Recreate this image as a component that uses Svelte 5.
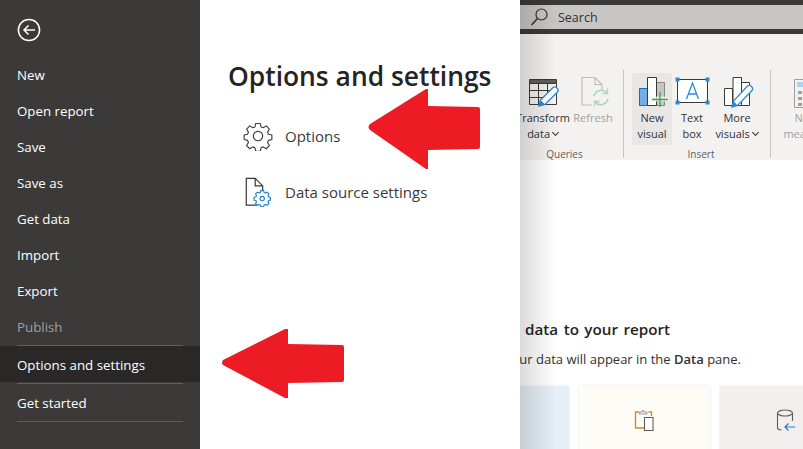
<script>
  const items = ['New', 'Open report', 'Save', 'Save as', 'Get data', 'Import', 'Export'];
</script>

<div class="page">
  <nav class="menu">
    <svg class="back" width="24" height="24" viewBox="0 0 24 24" fill="none" stroke="#fff">
      <circle cx="12" cy="12" r="10.6" stroke-width="1.5"/>
      <path d="M18 12H7M11.5 7.5 7 12l4.5 4.5" stroke-width="1.5"/>
    </svg>
    <ul>
      {#each items as label}
        <li class="item">{label}</li>
      {/each}
      <li class="item muted">Publish</li>
      <li class="sep"></li>
      <li class="item active">Options and settings</li>
      <li class="sep after"></li>
      <li class="item last">Get started</li>
      <li class="sep"></li>
    </ul>
  </nav>

  <section class="panel">
    <h1>Options and settings</h1>
    <div class="row">
      <svg width="32" height="32" viewBox="0 0 32 32" fill="none" stroke="#3b3a39" stroke-width="1.2">
        <circle cx="16" cy="16" r="5"/>
        <path d="M13.6 2.6h4.8l.9 3.7 2.2.9 3.3-2 3.4 3.4-2 3.3.9 2.2 3.7.9v4.800l-3.700.9-.9 2.200 2 3.300-3.400 3.400-3.300-2-2.200.9-.9 3.700h-4.800l-.9-3.700-2.200-.9-3.300 2-3.400-3.400 2-3.300-.9-2.200-3.700-.9v-4.800l3.700-.9.9-2.200-2-3.300 3.400-3.400 3.300 2 2.200-.9z" stroke-linejoin="round"/>
      </svg>
      <span>Options</span>
    </div>
    <div class="row">
      <svg width="32" height="32" viewBox="0 0 32 32" fill="none">
        <path d="M15 30H3.5V1.5H13L21 9.5v5M13 1.5V9.500h8" stroke="#3b3a39" stroke-width="1.3"/>
        <path d="M19 14.5h3l.5 2 1.3.6 1.800-1 2 2-1 1.800.6 1.300 2 .5v3l-2 .5-.6 1.300 1 1.800-2 2-1.800-1-1.300.6-.5 2h-3l-.5-2-1.300-.6-1.800 1-2-2 1-1.800-.6-1.300-2-.5v-3l2-.5.6-1.300-1-1.800 2-2 1.800 1 1.300-.6z" fill="#fff" stroke="#1f7fc4" stroke-width="1.2"/>
        <circle cx="20.5" cy="23" r="2.3" stroke="#1f7fc4" stroke-width="1.2"/>
      </svg>
      <span>Data source settings</span>
    </div>
  </section>

  <section class="app">
    <div class="titlebar">
      <div class="search">
        <svg width="20" height="20" viewBox="0 0 20 20" fill="none" stroke="#323130" stroke-width="1.2">
          <circle cx="11.5" cy="7.5" r="5.5"/><path d="M7.5 11.500 1.500 18" stroke-width="1.5"/>
        </svg>
        <span>Search</span>
      </div>
    </div>
    <div class="ribbon">
      <div class="group queries">
        <div class="tools">
          <div class="tool wide">
            <svg width="32" height="32" viewBox="0 0 32 32" fill="none">
              <path d="M2.5 3.5h27v4h-27z" fill="#605e5c" stroke="#3b3a39"/>
              <path d="M2.5 7.5h27v21h-27zM11.500 7.500v21M20.500 7.500v14M2.500 14.500h24M2.500 21.500h14" stroke="#3b3a39"/>
              <path d="M12 30l1.500-6L26 11.500q2-1.500 4 .5t.5 4L18 28.500z" fill="#fff" stroke="#2b88d8" stroke-width="1.3"/>
              <path d="M12 30l1.500-6 4.500 4.500z" fill="#2b88d8"/>
            </svg>
            <span>Transform</span><span>data <i class="chev"></i></span>
          </div>
          <div class="tool disabled">
            <svg width="32" height="32" viewBox="0 0 32 32" fill="none">
              <path d="M15 29H5V1.500h13l7 7V13M18 1.500v7h7" stroke="#bebbb8" stroke-width="1.1"/>
              <path d="M17 20a7.500 7.500 0 0 1 13-3M31 23a7.500 7.500 0 0 1-13 3" stroke="#a8d5b5" stroke-width="1.5"/>
              <path d="M30.500 12.500V17.500H25.500M17.500 30.500V25.500H22.500" stroke="#a8d5b5" stroke-width="1.3"/>
            </svg>
            <span>Refresh</span>
          </div>
        </div>
        <div class="label">Queries</div>
      </div>
      <div class="group insert">
        <div class="tools">
          <div class="tool selected">
            <svg width="32" height="32" viewBox="0 0 32 32" fill="none">
              <path d="M20.500 6.500h8v23h-8z" fill="#c8c6c4" stroke="#8a8886"/>
              <path d="M3.500 12.500h8v17h-8z" fill="#71afe5" stroke="#106ebe"/>
              <path d="M11.500 1.500h9v28h-9z" fill="#fff" stroke="#3b3a39"/>
              <path d="M15 20.500h18v5H15z" fill="#f3f2f1" opacity=".8"/>
              <path d="M16 23.500h16M24 16v15" stroke="#3fa35b" stroke-width="1.3"/>
            </svg>
            <span>New</span><span>visual</span>
          </div>
          <div class="tool">
            <svg width="32" height="32" viewBox="0 0 32 32" fill="none">
              <path d="M1.500 3.500h30v23h-30z" fill="#fff" stroke="#3b3a39"/>
              <path d="M10.500 23l6-16 6 16M12.700 18h7.600" stroke="#2b88d8" stroke-width="1.3"/>
              <path d="M-.5 1.500h4v4h-4zM29.500 1.500h4v4h-4zM-.5 24.500h4v4h-4zM29.500 24.500h4v4h-4z" fill="#2b88d8"/>
            </svg>
            <span>Text</span><span>box</span>
          </div>
          <div class="tool more">
            <svg width="32" height="32" viewBox="0 0 32 32" fill="none">
              <path d="M3.500 12.500h8v17h-8zM20.500 6.500h8v23h-8z" fill="#fff" stroke="#3b3a39"/>
              <path d="M12 1.500h8.500v28H12z" fill="#fff" stroke="#3b3a39"/>
              <path d="M11 31l1.500-6L26.500 10q2-1.500 4 .5t.5 4L16.500 29.500z" fill="#fff" stroke="#2b88d8" stroke-width="1.3"/>
              <path d="M11 31l1.500-6 4 4.500z" fill="#2b88d8"/>
            </svg>
            <span>More</span><span>visuals <i class="chev"></i></span>
          </div>
        </div>
        <div class="label">Insert</div>
      </div>
      <div class="group calc">
        <div class="tools">
          <div class="tool disabled">
            <svg width="32" height="32" viewBox="0 0 32 32" fill="none">
              <path d="M4.500 3.500h24v28h-24z" stroke="#a19f9d"/>
              <path d="M7 6h19v5H7z" fill="#a9d3f2"/>
              <path d="M8 15h4v3H8zM15 15h4v3h-4zM22 15h4v3h-4zM8 21h4v3H8zM15 21h4v3h-4zM22 21h4v3h-4zM8 27h4v3H8zM15 27h4v3h-4z" fill="#a19f9d"/>
            </svg>
            <span>New</span><span>measure</span>
          </div>
        </div>
      </div>
    </div>
    <div class="canvas">
      <h2>Add data to your report</h2>
      <p>Once loaded, your data will appear in the <b>Data</b> pane.</p>
      <div class="cards">
        <div class="card blue"></div>
        <div class="card cream">
          <svg width="24" height="24" viewBox="0 0 24 24" fill="none">
            <path d="M13 20H2.500V4h4M15.500 4h3v4" stroke="#d9822b" stroke-width="1.3"/>
            <path d="M6 6l1-2h2l1-2 1 2h3v2z" fill="#f3f2f1" stroke="#8a8886" stroke-width=".8"/>
            <path d="M11.500 9.500h8.500v13h-8.500z" fill="#fff" stroke="#605e5c" stroke-width="1.1"/>
          </svg>
        </div>
        <div class="card grey">
          <svg width="24" height="24" viewBox="0 0 24 24" fill="none">
            <path d="M3.500 5v15q0 1.500 4 2M18.500 5v8" stroke="#605e5c" stroke-width="1.1"/>
            <ellipse cx="11" cy="5" rx="7.500" ry="3" stroke="#605e5c" stroke-width="1.1"/>
            <path d="M21 19H11M14.500 15.500 11 19l3.500 3.500" stroke="#2b7cb3" stroke-width="1.2"/>
          </svg>
        </div>
      </div>
    </div>
  </section>

  <svg class="arrow one" width="114" height="84" viewBox="0 0 114 84">
    <path d="M59 2 3 37q-3 3 0 6l56 39h2V63l50-1q2 0 2-2V22q0-2-2-2l-50-1V2z" fill="#ed1c24"/>
  </svg>
  <svg class="arrow two" width="124" height="72" viewBox="0 0 124 72">
    <path d="M64 1 2 32q-2 3 0 5l62 33h3V55l54-1q2 0 2-2V19q0-2-2-2l-54-1V1z" fill="#ed1c24"/>
  </svg>
</div>

<style>
  :global(body) { margin: 0; }
  .page {
    position: relative;
    display: flex;
    width: 803px;
    height: 449px;
    overflow: hidden;
    font-family: "Open Sans", "Noto Sans", sans-serif;
    font-size: 13.3px;
    color: #252423;
    background: #fff;
  }
  .menu { flex: 0 0 200px; background: #3b3a39; color: #fff; }
  .back { display: block; margin: 18px 0 0 17px; }
  ul { list-style: none; margin: 15px 0 0; padding: 0; }
  .item { height: 36px; line-height: 36px; padding-left: 17px; }
  .muted { color: #a19f9d; }
  .active { background: #292827; line-height: 38px; }
  .sep { height: 1px; margin: 0 17px; background: #5f5e5c; }
  .sep.after { margin-top: 1px; }
  .last { height: 37px; line-height: 38px; }
  .panel { flex: 0 0 320px; background: #fff; box-sizing: border-box; padding: 57px 0 0 28px; }
  h1 { margin: 0 0 21px; font-size: 26.4px; line-height: 38px; font-weight: 600; color: #252423; white-space: nowrap; }
  .row { display: flex; align-items: center; gap: 12px; height: 40px; margin-bottom: 16px; padding-left: 15px; color: #3b3a39; font-size: 15px; }
  .row svg { flex: none; width: 30px; height: 30px; }
  .app { flex: 1; min-width: 0; display: flex; flex-direction: column; position: relative; overflow: hidden; }
  .app::before {
    content: ""; position: absolute; inset: 0 auto 0 0; width: 36px; z-index: 2;
    background: linear-gradient(90deg, rgba(0,0,0,.14), rgba(0,0,0,0));
  }
  .titlebar { background: #3b3a39; padding: 5px 0; }
  .search { height: 24px; background: #c8c6c4; display: flex; align-items: center; gap: 8px; padding-left: 10px; font-size: 12.5px; color: #323130; }
  .ribbon { height: 126px; background: #f3f2f1; display: flex; padding: 36px 0 2px; box-sizing: border-box; box-shadow: 0 1px 3px rgba(0,0,0,.15); position: relative; }
  .group { display: flex; flex-direction: column; box-sizing: border-box; flex: none; padding-top: 3px; }
  .queries { width: 104px; padding-left: 0; border-right: 1px solid #c8c6c4; }
  .queries .label { padding-right: 14px; }
  .insert { width: 147px; border-right: 1px solid #c8c6c4; padding-left: 8px; }
  .calc { padding-left: 11px; }
  .tools { display: flex; flex: 1; }
  .tool { display: flex; flex-direction: column; align-items: center; flex: none; width: 40px; font-size: 11px; line-height: 16px; height: 72px; box-sizing: border-box; padding-top: 3px; white-space: nowrap; color: #323130; }
  .tool svg { flex: none; margin-bottom: 2px; height: 32px; overflow: visible; }
  .tool.wide { width: 52px; margin: 0 4px 0 -3px; }
  .tool.more { width: 50px; }
  .calc .tool { width: 48px; }
  .tool.selected { background: #e8e7e6; }
  .tool.disabled { color: #a19f9d; }
  .label { text-align: center; font-size: 10px; line-height: 8px; height: 8px; color: #605e5c; }
  .chev { display: inline-block; width: 4px; height: 4px; border: solid #323130; border-width: 0 1px 1px 0; transform: rotate(45deg); margin: 0 1px 3px 0; }
  .canvas { flex: 1; background: #fff; position: relative; }
  h2 { position: absolute; right: 133px; top: 157px; margin: 0; font-size: 15.2px; word-spacing: 1.5px; font-weight: 600; line-height: 24px; white-space: nowrap; color: #252423; }
  p { position: absolute; right: 62px; top: 190px; margin: 0; font-size: 13px; line-height: 18px; white-space: nowrap; color: #323130; }
  p b { font-weight: 600; }
  .cards { position: absolute; left: -82px; top: 226px; display: flex; gap: 10px; }
  .card { flex: none; width: 131px; height: 70px; display: flex; justify-content: center; padding-top: 22px; box-sizing: border-box; box-shadow: 0 0 2px rgba(0,0,0,.12); }
  .blue { background: #e6eff8; }
  .cream { background: #fdfcf6; }
  .grey { background: #f1f0ef; }
  .arrow { position: absolute; }
  .one { left: 367px; top: 87px; }
  .two { left: 221px; top: 328px; }
</style>
